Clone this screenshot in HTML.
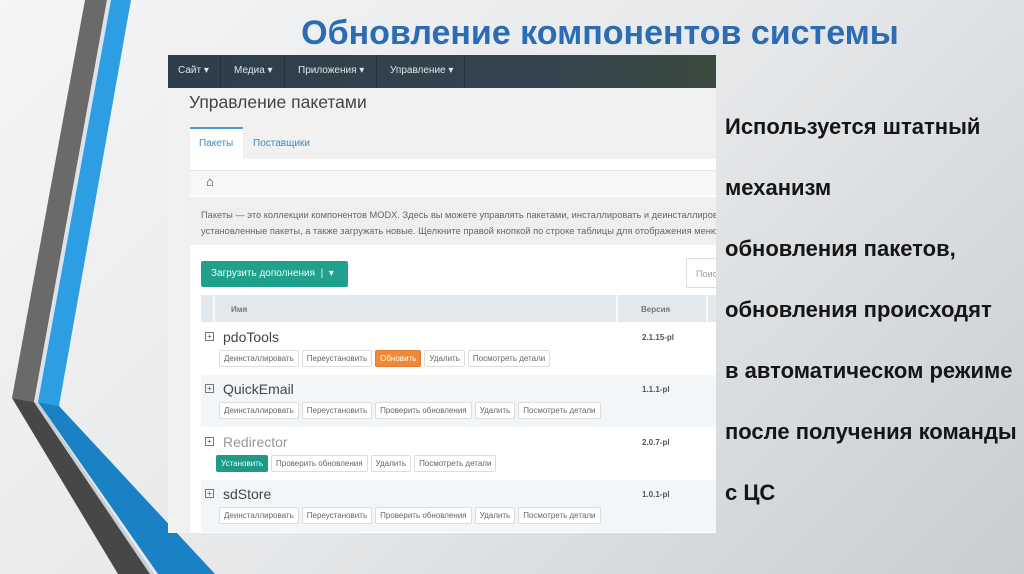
<!DOCTYPE html>
<html><head><meta charset="utf-8"><style>
*{margin:0;padding:0;box-sizing:border-box}
body{width:1024px;height:574px;overflow:hidden;position:relative;font-family:"Liberation Sans",sans-serif;background:linear-gradient(135deg,#f4f5f6 0%,#e6e8ea 50%,#c9cdd0 100%)}
.abs{position:absolute}
h1{position:absolute;left:200px;top:14px;width:800px;text-align:center;font-size:34px;font-weight:bold;color:#2b6cb4;white-space:nowrap}
.panel{position:absolute;left:168px;top:55px;width:548px;height:478px;background:#f1f1f1;overflow:hidden}
.nav{position:absolute;left:0;top:0;width:548px;height:33px;background:linear-gradient(90deg,#2d3e4a,#34454f 70%,#3a4a3e);font-size:10px;color:#dfe6ea}
.nav span{position:absolute;top:10px}
.nav i{position:absolute;top:0;width:1px;height:33px;background:#22313b}
.ttl{position:absolute;left:21px;top:37px;font-size:17.5px;color:#444}
.tab{position:absolute;left:22px;top:72px;width:53px;height:32px;background:#fff;border-top:2px solid #4a9ad0;font-size:10px;color:#3b8cc4;padding:9px 0 0 9px}
.tab2{position:absolute;left:85px;top:83px;font-size:10px;color:#3b8cc4}
.wh{position:absolute;left:22px;top:104px;width:526px;height:374px;background:#fff}
.desc{position:absolute;left:22px;top:142px;width:526px;height:48px;background:#efefef;font-size:9.3px;color:#666;padding:10px 0 0 11px;line-height:16px;white-space:nowrap}
.btn{position:absolute;left:33px;top:206px;width:147px;height:26px;background:#1fa18d;border-radius:2px;color:#e8fff9;font-size:10px;padding:7px 0 0 10px}
.hdr{position:absolute;left:33px;top:240px;width:515px;height:27px;background:#e3e8ed;font-size:8px;color:#777;font-weight:bold}
.row{position:absolute;left:33px;width:515px;height:52px}
.nm{position:absolute;left:22px;top:6px;font-size:14px;color:#444}
.pl{position:absolute;left:4px;top:9px;width:9px;height:9px;border:1px solid #777;font-size:8px;line-height:7px;text-align:center;color:#555}
.ver{position:absolute;left:441px;top:10px;font-size:8px;color:#555;font-weight:bold}
.bs{position:absolute;left:18px;top:27px;display:flex;gap:3px}
.bs b{font-weight:normal;font-size:8px;color:#666;border:1px solid #ddd;background:#fff;padding:3px 4px;border-radius:2px;white-space:nowrap}
</style></head><body>
<svg class="abs" style="left:0;top:0" width="260" height="574">
<polygon points="85,0 107,0 34,402 12,398" fill="#6a6a6a"/>
<polygon points="107,0 111,0 38,402 34,402" fill="#dde3e8"/>
<polygon points="111,0 131,0 59,406 38,402" fill="#2e9ee4"/>
<polygon points="12,398 34,402 150,574 118,574" fill="#474747"/>
<polygon points="34,402 38,402 154,574 150,574" fill="#c8d0d6"/>
<polygon points="38,402 59,406 215,574 158,574" fill="#1a82c4"/>
</svg>
<h1>Обновление компонентов системы</h1>
<div class="panel">
<div class="nav"><span style="left:10px">Сайт ▾</span><i style="left:52px"></i><span style="left:66px">Медиа ▾</span><i style="left:116px"></i><span style="left:130px">Приложения ▾</span><i style="left:208px"></i><span style="left:222px">Управление ▾</span><i style="left:296px"></i></div>
<div class="ttl">Управление пакетами</div>
<div class="wh"></div>
<div class="tab">Пакеты</div>
<div class="tab2">Поставщики</div>
<div class="abs" style="left:22px;top:115px;width:526px;height:25px;background:#f7f7f7;border-top:1px solid #e6e6e6"></div>
<div class="abs" style="left:38px;top:119px;font-size:13px;color:#444">&#8962;</div>
<div class="desc">Пакеты — это коллекции компонентов MODX. Здесь вы можете управлять пакетами, инсталлировать и деинсталлировать<br>установленные пакеты, а также загружать новые. Щелкните правой кнопкой по строке таблицы для отображения меню</div>
<div class="btn">Загрузить дополнения &nbsp;| &nbsp;▾</div>
<div class="abs" style="left:518px;top:203px;width:40px;height:30px;border:1px solid #ddd;background:#fff;font-size:9px;color:#999;padding:10px 0 0 9px">Поис</div>
<div class="hdr"><span class="abs" style="left:0;top:0;width:14px;height:27px;border-right:2px solid #f5f7f9"></span><span class="abs" style="left:30px;top:10px">Имя</span><span class="abs" style="left:415px;top:0;width:2px;height:27px;background:#f5f7f9"></span><span class="abs" style="left:440px;top:10px">Версия</span><span class="abs" style="left:505px;top:0;width:2px;height:27px;background:#f5f7f9"></span></div>
<div class="row" style="top:268px;background:#fff"><div class="pl">+</div><div class="nm">pdoTools</div><div class="ver">2.1.15-pl</div><div class="bs"><b>Деинсталлировать</b><b>Переустановить</b><b style="background:#f0883a;color:#ffe;border-color:#e07a30">Обновить</b><b>Удалить</b><b>Посмотреть детали</b></div></div>
<div class="row" style="top:320px;background:#f3f6f8"><div class="pl">+</div><div class="nm">QuickEmail</div><div class="ver">1.1.1-pl</div><div class="bs"><b>Деинсталлировать</b><b>Переустановить</b><b>Проверить обновления</b><b>Удалить</b><b>Посмотреть детали</b></div></div>
<div class="row" style="top:373px;background:#fff"><div class="pl">+</div><div class="nm" style="color:#999">Redirector</div><div class="ver">2.0.7-pl</div><div class="bs" style="left:15px"><b style="background:#1f9a86;color:#e8fff9;border-color:#1f9a86">Установить</b><b>Проверить обновления</b><b>Удалить</b><b>Посмотреть детали</b></div></div>
<div class="row" style="top:425px;background:#f3f6f8"><div class="pl">+</div><div class="nm">sdStore</div><div class="ver">1.0.1-pl</div><div class="bs"><b>Деинсталлировать</b><b>Переустановить</b><b>Проверить обновления</b><b>Удалить</b><b>Посмотреть детали</b></div></div>
</div>
<div class="abs" style="left:725px;top:96px;font-size:22px;font-weight:bold;color:#151515;line-height:61px;white-space:nowrap">Используется штатный<br>механизм<br>обновления пакетов,<br>обновления происходят<br>в автоматическом режиме<br>после получения команды<br>с ЦС</div>
</body></html>
